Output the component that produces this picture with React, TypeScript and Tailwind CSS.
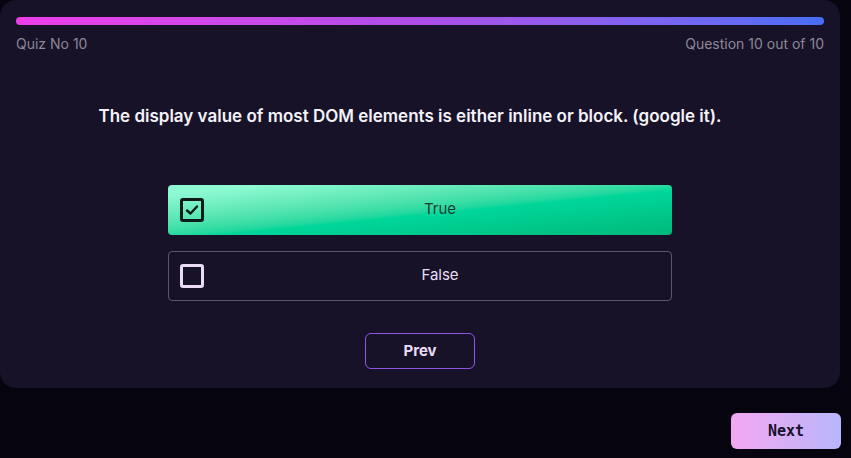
import React from "react";

export default function App() {
  return (
    <div className="w-[851px] h-[458px] bg-[#06050f] flex flex-col" style={{ fontFamily: "Inter, 'Noto Sans', sans-serif" }}>
      <div className="w-[840px] h-[388px] bg-[#181229] rounded-[16px] flex flex-col px-4 pt-[17px]">
        <div className="h-[8px] w-full rounded-full bg-gradient-to-r from-[#ee3de9] via-[#b04ee9] to-[#476ef6]" />
        <div className="flex justify-between mt-[10px] text-[14px] text-[#8b8797] leading-[17px]">
          <span>Quiz No 10</span>
          <span>Question 10 out of 10</span>
        </div>
        <div className="mt-[53px] text-center text-[17px] font-semibold text-[#f4f2f8] leading-[22px] pr-[20px]">
          The display value of most DOM elements is either inline or block. (google it).
        </div>
        <div className="mt-[58px] flex flex-col items-center gap-[16px]">
          <div className="w-[504px] h-[50px] rounded-[4px] bg-gradient-to-br from-[#8cf9d2] from-[10%] via-[#00d69a] via-[55%] to-[#00b97a] flex items-center px-[12px]">
            <div className="w-[24px] h-[24px] rounded-[3px] border-[3px] border-[#0f1a1a] flex items-center justify-center shrink-0">
              <svg width="16" height="16" viewBox="0 0 16 16" fill="none">
                <path d="M3 8.5 L6.5 11.5 L13 4.5" stroke="#0f1a1a" strokeWidth="2.4" strokeLinecap="round" strokeLinejoin="round" />
              </svg>
            </div>
            <span className="flex-1 text-center text-[15px] text-[#1d3d33] pl-[16px] -mt-[2px]">True</span>
          </div>
          <div className="w-[504px] h-[50px] rounded-[4px] border border-[#5c566d] flex items-center px-[11px]">
            <div className="w-[24px] h-[24px] rounded-[3px] border-[3px] border-[#eadcf6] shrink-0" />
            <span className="flex-1 text-center text-[15px] text-[#e8def3] pl-[16px] -mt-[2px]">False</span>
          </div>
          <button className="mt-[16px] w-[110px] h-[36px] rounded-[6px] border border-[#8f55e6] text-[#eadcf6] font-bold text-[15px]">
            Prev
          </button>
        </div>
      </div>
      <div className="flex justify-end pr-[10px] mt-[25px]">
        <button
          className="w-[110px] h-[36px] rounded-[6px] bg-gradient-to-r from-[#f3a7f2] to-[#b8b6fb] text-[#17122a] font-bold text-[15px]"
          style={{ fontFamily: "'DejaVu Sans Mono', 'Liberation Mono', monospace" }}
        >
          Next
        </button>
      </div>
    </div>
  );
}
